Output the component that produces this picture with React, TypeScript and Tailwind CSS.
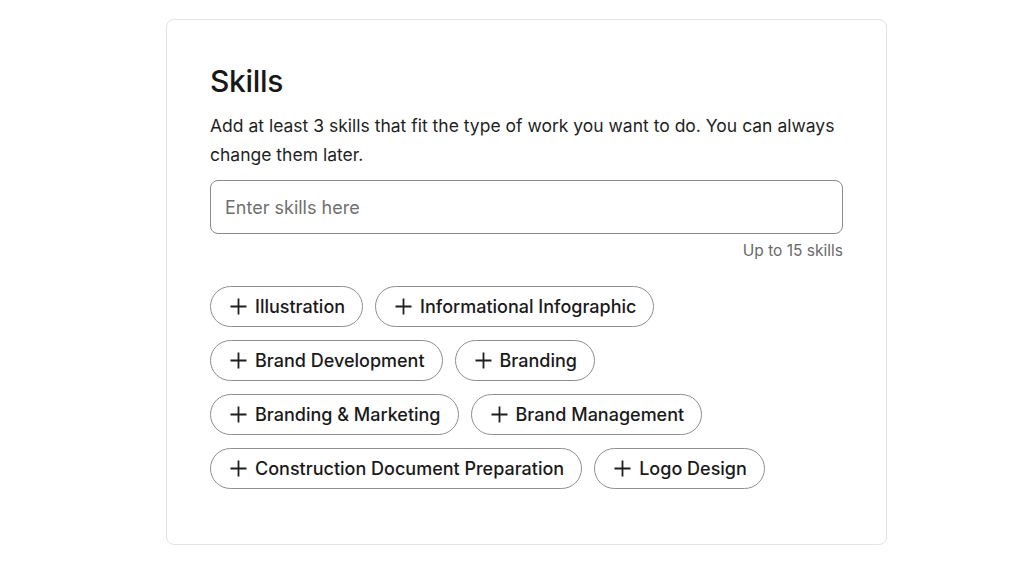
import React from "react";

const skills = [
  ["Illustration", "Informational Infographic"],
  ["Brand Development", "Branding"],
  ["Branding & Marketing", "Brand Management"],
  ["Construction Document Preparation", "Logo Design"],
];

function Plus() {
  return (
    <svg width="17" height="17" viewBox="0 0 17 17" className="shrink-0">
      <path d="M8.5 0.5V16.5M0.5 8.5H16.5" stroke="#1f1f1f" strokeWidth="1.8" />
    </svg>
  );
}

function Chip({ label }: { label: string }) {
  return (
    <button className="flex h-[41px] items-center gap-[8px] rounded-full border border-[#8e8e8e] bg-white pl-[19px] pr-[17px] text-[18px] font-medium text-[#1a1a1a]">
      <Plus />
      <span>{label}</span>
    </button>
  );
}

export default function App() {
  return (
    <div className="min-h-[575px] bg-white pt-[19px] pl-[166px]" style={{ fontFamily: 'Inter, "Liberation Sans", Arial, sans-serif' }}>
      <div className="w-[721px] h-[526px] rounded-[8px] border border-[#e3e3e3] px-[43px] pt-[41px]">
        <h1 className="text-[30px] leading-[40px] font-medium tracking-[-0.3px] text-[#181818]">Skills</h1>
        <p className="mt-[10px] text-[17.5px] leading-[29px] text-[#1f1f1f]">
          Add at least 3 skills that fit the type of work you want to do. You can always change them later.
        </p>
        <div className="mt-[11px] flex h-[54px] items-center rounded-[8px] border border-[#8a8a8a] px-[14px]">
          <input
            className="w-full bg-transparent text-[18px] text-[#1a1a1a] outline-none placeholder:text-[#6f6f6f]"
            placeholder="Enter skills here"
          />
        </div>
        <div className="mt-[7px] text-right text-[15.5px] leading-[20px] text-[#6a6a6a]">Up to 15 skills</div>
        <div className="mt-[25px] flex flex-col gap-[13px]">
          {skills.map((row, i) => (
            <div key={i} className="flex gap-[12px]">
              {row.map((s) => (
                <Chip key={s} label={s} />
              ))}
            </div>
          ))}
        </div>
      </div>
    </div>
  );
}
